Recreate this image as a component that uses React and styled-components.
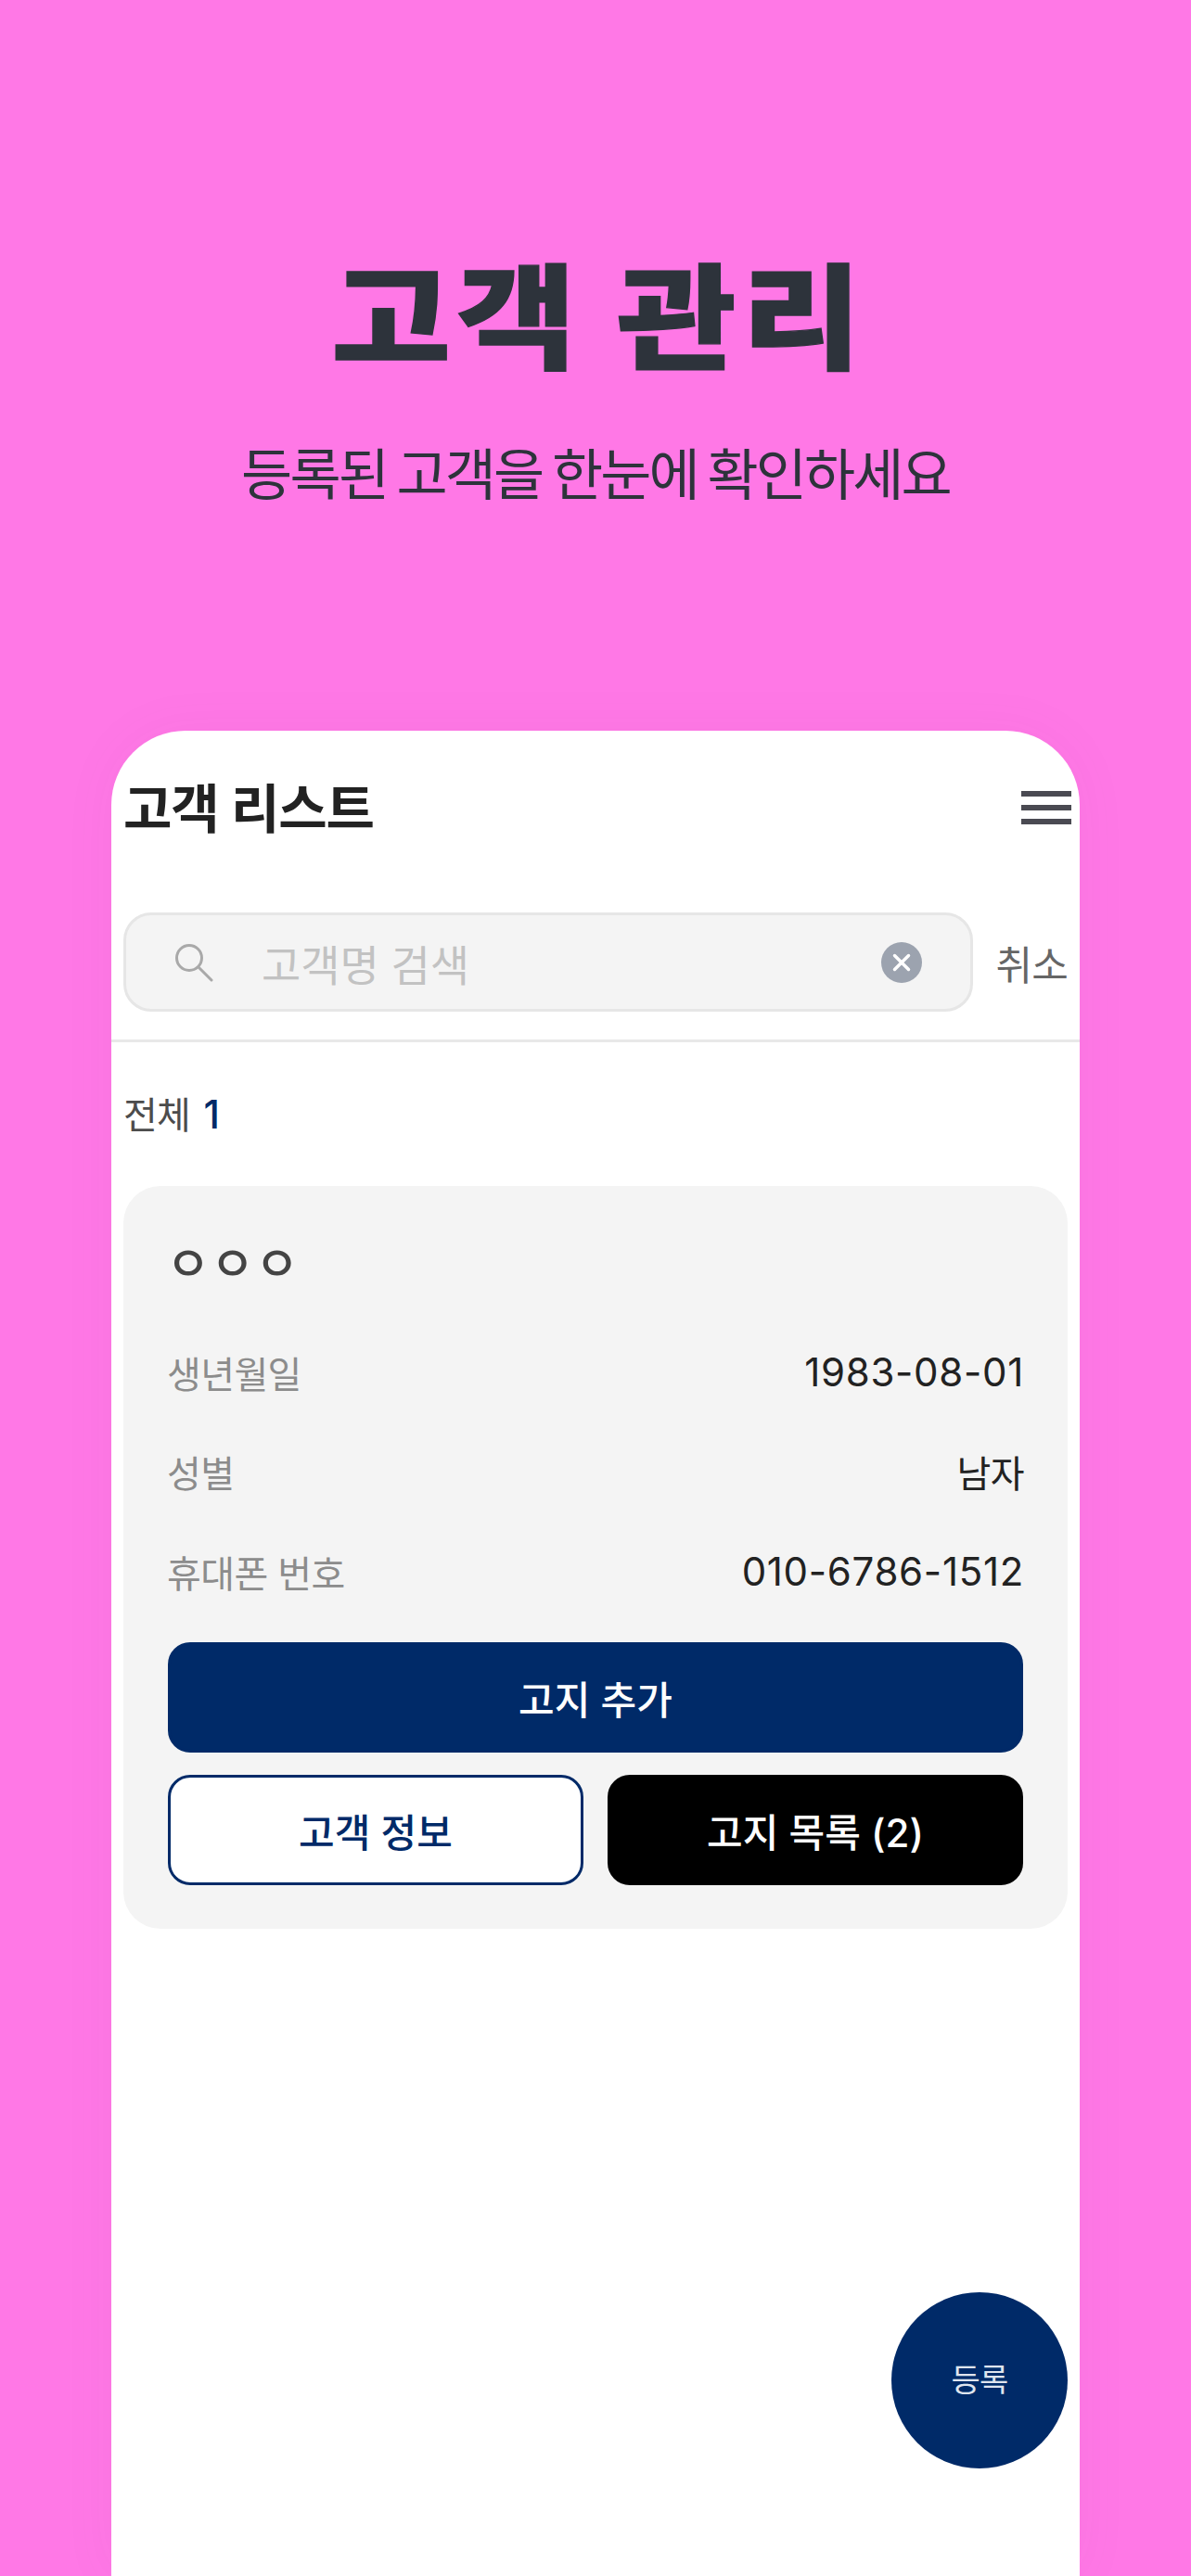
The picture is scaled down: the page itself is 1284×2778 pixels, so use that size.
import React from 'react'
import styled, { createGlobalStyle } from 'styled-components'

const GlobalStyle = createGlobalStyle`
    html, body {
        margin: 0;
        padding: 0;
        background: #ff78e6;
    }
    body {
        font-family: Inter, "Noto Sans CJK KR", sans-serif;
        overflow: hidden;
    }
`

const Page = styled.div`
    width: 1284px;
    height: 2778px;
    overflow: hidden;
    background: #ff78e6;
    display: flex;
    flex-direction: column;
    align-items: center;
`

const Hero = styled.div`
    padding-top: 264px;
    text-align: center;
    color: #2d333b;
`

const HeroTitle = styled.h1`
    margin: 0;
    padding-left: 8px;
    font-size: 140px;
    line-height: 140px;
    font-weight: 900;
    letter-spacing: 6px;
    -webkit-text-stroke: 1.5px #2d333b;
    transform: scaleY(0.88);
    font-family: "Noto Sans CJK KR", sans-serif;
`

const HeroText = styled.p`
    margin: 69px 0 0;
    font-size: 60px;
    line-height: 70px;
    font-weight: 400;
    letter-spacing: -2.9px;
    font-family: "Noto Sans CJK KR", sans-serif;
`

const Phone = styled.div`
    position: relative;
    flex: 1;
    width: 1044px;
    margin-top: 245px;
    background: #fff;
    border-radius: 80px 80px 0 0;
    box-shadow: 0 0 60px rgba(120, 60, 120, 0.05);
`

const Header = styled.div`
    height: 160px;
    display: flex;
    align-items: center;
    justify-content: space-between;
    padding: 0 9px 0 13px;

    svg {
        margin-top: 6px;
    }
`

const PageTitle = styled.div`
    font-size: 57px;
    font-weight: 600;
    letter-spacing: -1.1px;
    color: #222;
`

const SearchRow = styled.div`
    display: flex;
    align-items: center;
    gap: 24px;
    padding: 36px 13px 30px;
    border-bottom: 3px solid #e8e8e8;
`

const SearchBox = styled.div`
    flex: 1;
    height: 107px;
    box-sizing: border-box;
    display: flex;
    align-items: center;
    padding: 0 52px 0 52px;
    background: #f4f4f4;
    border: 3px solid #e6e6e6;
    border-radius: 30px;
`

const Placeholder = styled.div`
    flex: 1;
    margin-left: 52px;
    font-size: 46px;
    letter-spacing: -0.1px;
    color: #c2c2c2;
`

const Cancel = styled.div`
    font-size: 43px;
    letter-spacing: -0.8px;
    color: #666;
`

const Count = styled.div`
    height: 155px;
    line-height: 155px;
    padding-left: 13px;
    font-size: 40px;
    letter-spacing: -0.8px;
    color: #4c4c4c;
`

const CountValue = styled.span`
    margin-left: 4px;
    font-size: 42px;
    font-weight: 500;
    color: #002a68;
`

const Card = styled.div`
    margin: 0 13px;
    padding: 42px 48px 47px 48px;
    background: #f4f4f4;
    border-radius: 40px;
`

const Name = styled.div`
    height: 84px;
    line-height: 86px;
    margin: 0 0 21px -2px;
    font-size: 52px;
    font-weight: 500;
    color: #444;
`

const Row = styled.div`
    height: 107.5px;
    display: flex;
    align-items: center;
    justify-content: space-between;
`

const Label = styled.div`
    margin-left: -1px;
    font-size: 40px;
    letter-spacing: -0.6px;
    color: #8c8c8c;
`

const Value = styled.div`
    margin-right: -1px;
    font-size: ${(props) => (props.$text ? '40px' : '42px')};
    letter-spacing: ${(props) => (props.$text ? '-0.6px' : '0.7px')};
    color: #222;
`

const Buttons = styled.div`
    display: grid;
    grid-template-columns: 1fr 1fr;
    gap: 24px 26px;
    margin-top: 22px;
`

const Button = styled.button`
    grid-column: ${(props) => (props.$wide ? '1 / 3' : 'auto')};
    height: 119px;
    box-sizing: border-box;
    padding: 0;
    font-family: inherit;
    font-size: 42px;
    font-weight: 500;
    letter-spacing: 0;
    border-radius: 24px;
    color: ${(props) => (props.$outline ? '#002a68' : '#fff')};
    background: ${(props) => props.$bg};
    border: 3px solid ${(props) => (props.$outline ? '#002a68' : props.$bg)};
`

const Fab = styled.button`
    position: absolute;
    right: 13px;
    bottom: 116px;
    width: 190px;
    height: 190px;
    padding: 0 0 5px;
    border: 0;
    border-radius: 50%;
    background: #002a68;
    color: #dfe4ee;
    font-family: inherit;
    font-size: 34px;
    letter-spacing: -0.8px;
`

function MenuIcon() {
    return (
        <svg width="54" height="36" viewBox="0 0 54 36" fill="#4a4a52">
            <rect x="0" y="0" width="54" height="6" />
            <rect x="0" y="15" width="54" height="6" />
            <rect x="0" y="30" width="54" height="6" />
        </svg>
    )
}

function SearchIcon() {
    return (
        <svg width="42" height="42" viewBox="0 0 42 42" fill="none" stroke="#a9a9a9" strokeWidth="3">
            <circle cx="16" cy="16" r="13.5" />
            <line x1="26" y1="26" x2="40" y2="40" strokeLinecap="round" />
        </svg>
    )
}

function ClearIcon() {
    return (
        <svg width="44" height="44" viewBox="0 0 44 44">
            <circle cx="22" cy="22" r="22" fill="#9ca3af" />
            <path d="M14.5 14.5 L29.5 29.5 M29.5 14.5 L14.5 29.5" stroke="#fff" strokeWidth="3.5" strokeLinecap="round" />
        </svg>
    )
}

function App() {
    return (
        <Page>
            <GlobalStyle />
            <Hero>
                <HeroTitle>고객 관리</HeroTitle>
                <HeroText>등록된 고객을 한눈에 확인하세요</HeroText>
            </Hero>
            <Phone>
                <Header>
                    <PageTitle>고객 리스트</PageTitle>
                    <MenuIcon />
                </Header>
                <SearchRow>
                    <SearchBox>
                        <SearchIcon />
                        <Placeholder>고객명 검색</Placeholder>
                        <ClearIcon />
                    </SearchBox>
                    <Cancel>취소</Cancel>
                </SearchRow>
                <Count>
                    전체 <CountValue>1</CountValue>
                </Count>
                <Card>
                    <Name>ㅇㅇㅇ</Name>
                    <Row>
                        <Label>생년월일</Label>
                        <Value>1983-08-01</Value>
                    </Row>
                    <Row>
                        <Label>성별</Label>
                        <Value $text>남자</Value>
                    </Row>
                    <Row>
                        <Label>휴대폰 번호</Label>
                        <Value>010-6786-1512</Value>
                    </Row>
                    <Buttons>
                        <Button $wide $bg="#002a68">고지 추가</Button>
                        <Button $outline $bg="#fff">고객 정보</Button>
                        <Button $bg="#000">고지 목록 (2)</Button>
                    </Buttons>
                </Card>
                <Fab>등록</Fab>
            </Phone>
        </Page>
    )
}

export default App
